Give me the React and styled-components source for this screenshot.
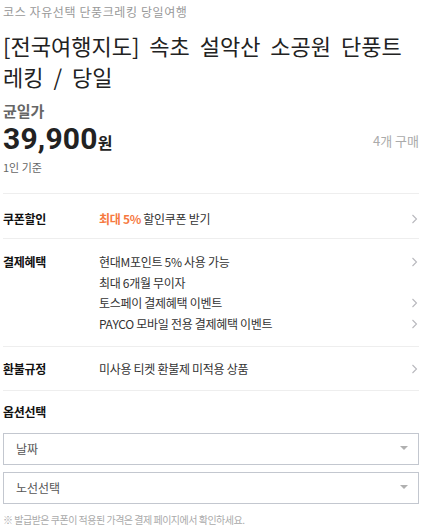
import React from "react";
import styled, { createGlobalStyle } from "styled-components";

const Global = createGlobalStyle`
  html, body { margin: 0; padding: 0; background: #fff; }
  body { font-family: "Noto Sans CJK KR", "Noto Sans", sans-serif; color: #222; }
  * { box-sizing: border-box; }
`;

const Page = styled.div`
  width: 428px;
  padding: 0 9px 0 3px;
`;

const Breadcrumb = styled.div`
  font-size: 12px;
  line-height: 18px;
  color: #999;
  padding-top: 3px;
  letter-spacing: 0.6px;
`;

const Title = styled.h1`
  margin: 9px 0 0;
  font-size: 22px;
  line-height: 31px;
  font-weight: 400;
  color: #222;
  letter-spacing: 0;
  word-spacing: 5px;
`;

const PriceBlock = styled.div`
  padding: 9px 0 17px;
  border-bottom: 1px solid #eee;
`;

const PriceLabel = styled.div`
  font-size: 15px;
  line-height: 20px;
  font-weight: 700;
  color: #666;
`;

const PriceRow = styled.div`
  display: flex;
  align-items: center;
  justify-content: space-between;
  height: 34px;
`;

const Price = styled.div`
  display: flex;
  align-items: baseline;
  color: #222;
`;

const Amount = styled.span`
  font-family: Roboto, "Noto Sans CJK KR", sans-serif;
  font-size: 30px;
  font-weight: 700;
  letter-spacing: 0.2px;
`;

const Won = styled.span`
  font-size: 16px;
  font-weight: 700;
  margin-left: 0;
`;

const Bought = styled.span`
  font-size: 13px;
  color: #aaa;
  padding-top: 4px;
`;

const Sub = styled.div`
  font-size: 11px;
  line-height: 18px;
  color: #666;
  margin-top: 3px;
`;

const InfoRow = styled.div`
  display: flex;
  padding: ${(p) => p.$pad || "13px 0"};
  border-bottom: 1px solid #eee;
`;

const Label = styled.div`
  width: 96px;
  flex: none;
  font-size: 12px;
  line-height: 20px;
  font-weight: 700;
  color: #111;
  letter-spacing: -0.3px;
`;

const Lines = styled.div`
  flex: 1;
  display: flex;
  flex-direction: column;
  gap: 0.5px;
`;

const Line = styled.div`
  display: flex;
  align-items: center;
  justify-content: space-between;
  font-size: 12px;
  line-height: 20px;
  color: #333;
  letter-spacing: -0.3px;
`;

const Accent = styled.span`
  color: #f6793f;
  font-weight: 700;
`;

const Chevron = () => (
  <svg width="7" height="10" viewBox="0 0 7 10" style={{ flex: "none", marginRight: "1px" }}>
    <path d="M1.5 1 L5.5 5 L1.5 9" fill="none" stroke="#b8b8bd" strokeWidth="1.1" />
  </svg>
);

const OptionTitle = styled.div`
  font-size: 12px;
  line-height: 20px;
  font-weight: 700;
  color: #111;
  padding-top: 11px;
  letter-spacing: -0.3px;
`;

const Selects = styled.div`
  display: flex;
  flex-direction: column;
  gap: 7px;
  margin-top: 11px;
`;

const Select = styled.div`
  height: 32px;
  border: 1px solid #c3c7cf;
  display: flex;
  align-items: center;
  justify-content: space-between;
  padding: 0 10px 0 12px;
  font-size: 12px;
  color: #555;
`;

const Caret = () => (
  <svg width="8" height="5" viewBox="0 0 8 5">
    <path d="M0 0 H8 L4 4 Z" fill="#b0b0b0" />
  </svg>
);

const Note = styled.div`
  margin-top: 8px;
  font-size: 10px;
  line-height: 16px;
  color: #aaa;
  letter-spacing: -0.5px;
`;

export default function App() {
  return (
    <Page>
      <Global />
      <Breadcrumb>코스 자유선택 단풍크레킹 당일여행</Breadcrumb>
      <Title>[전국여행지도] 속초 설악산 소공원 단풍트레킹 / 당일</Title>
      <PriceBlock>
        <PriceLabel>균일가</PriceLabel>
        <PriceRow>
          <Price>
            <Amount>39,900</Amount>
            <Won>원</Won>
          </Price>
          <Bought>4개 구매</Bought>
        </PriceRow>
        <Sub>1인 기준</Sub>
      </PriceBlock>
      <InfoRow $pad="15px 0 9px">
        <Label>쿠폰할인</Label>
        <Lines>
          <Line>
            <span>
              <Accent>최대 5%</Accent> 할인쿠폰 받기
            </span>
            <Chevron />
          </Line>
        </Lines>
      </InfoRow>
      <InfoRow $pad="13px 0 12px">
        <Label>결제혜택</Label>
        <Lines>
          <Line>
            <span>현대M포인트 5% 사용 가능</span>
            <Chevron />
          </Line>
          <Line>
            <span>최대 6개월 무이자</span>
          </Line>
          <Line>
            <span>토스페이 결제혜택 이벤트</span>
            <Chevron />
          </Line>
          <Line>
            <span>PAYCO 모바일 전용 결제혜택 이벤트</span>
            <Chevron />
          </Line>
        </Lines>
      </InfoRow>
      <InfoRow $pad="12px 0 11px">
        <Label>환불규정</Label>
        <Lines>
          <Line>
            <span>미사용 티켓 환불제 미적용 상품</span>
            <Chevron />
          </Line>
        </Lines>
      </InfoRow>
      <OptionTitle>옵션선택</OptionTitle>
      <Selects>
        <Select>
          <span>날짜</span>
          <Caret />
        </Select>
        <Select>
          <span>노선선택</span>
          <Caret />
        </Select>
      </Selects>
      <Note>※ 발급받은 쿠폰이 적용된 가격은 결제 페이지에서 확인하세요.</Note>
    </Page>
  );
}
